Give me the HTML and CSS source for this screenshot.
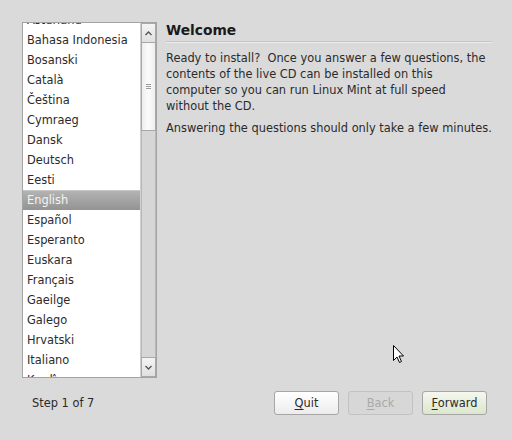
FILE: index.html
```html
<!DOCTYPE html>
<html>
<head>
<meta charset="utf-8">
<link rel="stylesheet" href="styles.css">
</head>
<body>
<div class="window">
  <div class="main">
    <div class="listbox">
      <div class="list">
        <div class="rows">
          <div class="row">Asturianu</div>
          <div class="row">Bahasa Indonesia</div>
          <div class="row">Bosanski</div>
          <div class="row">Català</div>
          <div class="row">Čeština</div>
          <div class="row">Cymraeg</div>
          <div class="row">Dansk</div>
          <div class="row">Deutsch</div>
          <div class="row">Eesti</div>
          <div class="row selected">English</div>
          <div class="row">Español</div>
          <div class="row">Esperanto</div>
          <div class="row">Euskara</div>
          <div class="row">Français</div>
          <div class="row">Gaeilge</div>
          <div class="row">Galego</div>
          <div class="row">Hrvatski</div>
          <div class="row">Italiano</div>
          <div class="row">Kurdî</div>
        </div>
      </div>
      <div class="scrollbar">
        <div class="sb-btn sb-up">
          <svg width="7" height="5" viewBox="0 0 7 5"><path d="M0.5 4 L3.5 1 L6.5 4" fill="none" stroke="#555" stroke-width="1.3"/></svg>
        </div>
        <div class="sb-thumb">
          <span class="grip"></span><span class="grip"></span><span class="grip"></span>
        </div>
        <div class="sb-trough"></div>
        <div class="sb-btn sb-down">
          <svg width="7" height="5" viewBox="0 0 7 5"><path d="M0.5 1 L3.5 4 L6.5 1" fill="none" stroke="#555" stroke-width="1.3"/></svg>
        </div>
      </div>
    </div>
    <div class="content">
      <h1 class="title">Welcome</h1>
      <div class="sep"></div>
      <p class="para intro">Ready to install?&nbsp; Once you answer a few questions, the contents of the live CD can be installed on this computer so you can run Linux Mint at full speed without the CD.</p>
      <p class="para">Answering the questions should only take a few minutes.</p>
    </div>
  </div>
  <div class="footer">
    <div class="step">Step 1 of 7</div>
    <div class="buttons">
      <button class="btn btn-quit"><u>Q</u>uit</button>
      <button class="btn btn-back"><u>B</u>ack</button>
      <button class="btn btn-fwd"><u>F</u>orward</button>
    </div>
  </div>
  <svg class="cursor" width="12" height="19" viewBox="0 0 12 19">
    <path d="M0.5 0.5 L0.5 15.5 L4 12 L6.5 17.5 L8.5 16.5 L6 11 L10.5 11 Z" fill="#fff" stroke="#000" stroke-width="1" stroke-linejoin="miter"/>
  </svg>
</div>
</body>
</html>
```

FILE: styles.css
```css
html, body {
  margin: 0;
  padding: 0;
}
body {
  background: #dadada;
  font-family: "DejaVu Sans", "Liberation Sans", sans-serif;
  font-size: 11.4px;
  color: #2b2b2b;
}
.window {
  position: relative;
  width: 512px;
  height: 440px;
  overflow: hidden;
}
.main {
  display: flex;
  padding: 22px 0 0 22px;
}
.listbox {
  display: flex;
  width: 133px;
  height: 354px;
  border: 1px solid #a3a3a3;
  background: #fff;
}
.list {
  flex: 1;
  overflow: hidden;
  background: #fff;
  border-right: 1px solid #d0d0d0;
}
.rows {
  margin-top: -13px;
}
.row {
  height: 20px;
  line-height: 20px;
  padding-left: 4px;
  white-space: nowrap;
}
.row.selected {
  background: linear-gradient(#b3b3b3, #939393);
  border-top: 1px solid #c8c8c8;
  height: 19px;
  line-height: 19px;
  color: #f4f4f4;
}
.scrollbar {
  width: 15px;
  display: flex;
  flex-direction: column;
  background: #dcdcdc;
}
.sb-btn {
  height: 20px;
  box-sizing: border-box;
  border: 1px solid #a8a8a8;
  background: linear-gradient(#f4f4f4, #e0e0e0);
  display: flex;
  align-items: center;
  justify-content: center;
}
.sb-thumb {
  height: 88px;
  box-sizing: border-box;
  border: 1px solid #a8a8a8;
  border-top: none;
  background: linear-gradient(90deg, #eeeeee, #fbfbfb 50%, #eeeeee);
  display: flex;
  flex-direction: column;
  align-items: center;
  justify-content: center;
  gap: 1px;
}
.grip {
  display: block;
  width: 5px;
  height: 1px;
  background: #9a9a9a;
}
.sb-trough {
  flex: 1;
  background: #d6d6d6;
  border-left: 1px solid #b8b8b8;
  border-right: 1px solid #b8b8b8;
}
.content {
  margin-left: 9px;
  width: 326px;
}
.title {
  margin: 0;
  font-size: 13.8px;
  font-weight: bold;
  line-height: 17px;
  color: #1a1a1a;
}
.sep {
  margin-top: 2px;
  height: 1px;
  background: #c4c4c4;
  border-bottom: 1px solid #ececec;
}
.para {
  margin: 7px 0 0 0;
  line-height: 16px;
  white-space: nowrap;
}
.para.intro {
  width: 320px;
  white-space: normal;
}
.para + .para {
  margin-top: 6px;
}
.footer {
  display: flex;
  align-items: center;
  justify-content: space-between;
  padding: 13px 25px 0 32px;
}
.buttons {
  display: flex;
  gap: 9px;
}
.btn {
  width: 65px;
  height: 24px;
  font-family: "DejaVu Sans", "Liberation Sans", sans-serif;
  font-size: 11.4px;
  border: 1px solid #a6a6a6;
  border-radius: 3px;
  background: linear-gradient(#ffffff, #ececec);
  color: #2b2b2b;
  padding: 0;
}
.btn u {
  text-decoration-thickness: 1px;
  text-underline-offset: 2px;
}
.btn-back {
  background: #d7d7d7;
  border-color: #c2c2c2;
  color: #a9a9a9;
}
.btn-fwd {
  background: linear-gradient(#f4f8ee, #dce6cc);
}
.cursor {
  position: absolute;
  left: 393px;
  top: 345px;
}
```
